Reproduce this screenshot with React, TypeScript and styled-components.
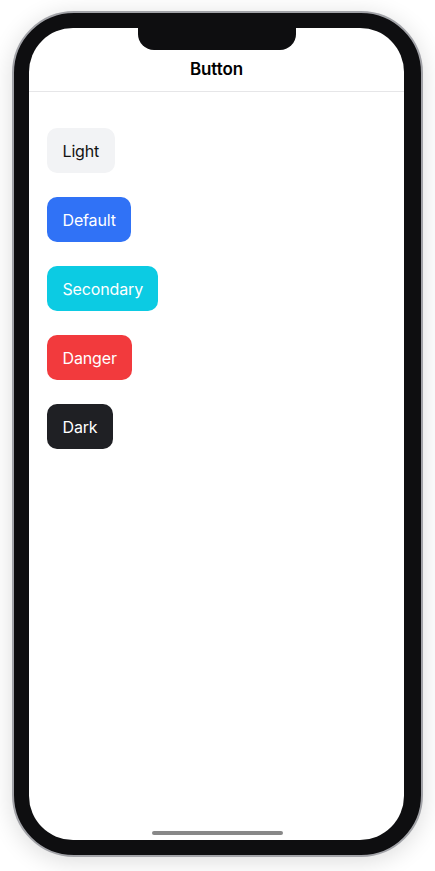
import styled, { createGlobalStyle } from "styled-components";

const GlobalStyle = createGlobalStyle`
  html, body {
    margin: 0;
    padding: 0;
    background: #ffffff;
  }
  body {
    font-family: Inter, "Noto Sans", sans-serif;
  }
`;

type Variant = "light" | "default" | "secondary" | "danger" | "dark";

const palette: Record<Variant, { bg: string; fg: string }> = {
    light: { bg: "#f2f3f5", fg: "#111111" },
    default: { bg: "#3072f6", fg: "#ffffff" },
    secondary: { bg: "#0ccbe3", fg: "#ffffff" },
    danger: { bg: "#f23a3d", fg: "#ffffff" },
    dark: { bg: "#1f2024", fg: "#ffffff" },
};

const Page = styled.div`
  width: 435px;
  height: 871px;
  display: flex;
  justify-content: center;
  padding-top: 11px;
  box-sizing: border-box;
`;

// outer gray rim + black bezel
const Phone = styled.div`
  width: 411px;
  height: 846px;
  box-sizing: border-box;
  border: 2px solid #a2a3a8;
  border-radius: 62px;
  background: #0e0e10;
  padding: 15px;
  box-shadow: 0 4px 24px rgba(0, 0, 0, 0.14);
`;

const Screen = styled.div`
  position: relative;
  width: 375px;
  height: 812px;
  background: #ffffff;
  border-radius: 44px;
  overflow: hidden;
  display: flex;
  flex-direction: column;
`;

const Notch = styled.div`
  position: absolute;
  top: 0;
  left: 109px;
  width: 158px;
  height: 22px;
  background: #0e0e10;
  border-radius: 0 0 16px 16px;
`;

const Header = styled.header`
  height: 64px;
  display: flex;
  align-items: flex-end;
  justify-content: center;
  padding-bottom: 11px;
  box-sizing: border-box;
  border-bottom: 1px solid #e6e6e8;
`;

const Title = styled.h1`
  margin: 0;
  font-size: 17px;
  line-height: 22px;
  font-weight: 600;
  letter-spacing: -0.1px;
  color: #000000;
`;

const Content = styled.main`
  flex: 1;
  display: flex;
  flex-direction: column;
  align-items: flex-start;
  gap: 24px;
  padding: 36px 18px;
`;

const Button = styled.button<{ $variant: Variant }>`
  height: 45px;
  padding: 0 15.5px;
  border: none;
  border-radius: 10px;
  font-family: Inter, "Noto Sans", sans-serif;
  font-size: 16px;
  letter-spacing: -0.15px;
  background: ${(p) => palette[p.$variant].bg};
  color: ${(p) => palette[p.$variant].fg};
  cursor: pointer;
`;

const HomeBar = styled.div`
  position: absolute;
  bottom: 5px;
  left: 123px;
  width: 131px;
  height: 4px;
  border-radius: 2px;
  background: #888888;
`;

const buttons: { label: string; variant: Variant }[] = [
    { label: "Light", variant: "light" },
    { label: "Default", variant: "default" },
    { label: "Secondary", variant: "secondary" },
    { label: "Danger", variant: "danger" },
    { label: "Dark", variant: "dark" },
];

export default function App() {
    return (
        <Page>
            <GlobalStyle />
            <Phone>
                <Screen>
                    <Notch />
                    <Header>
                        <Title>Button</Title>
                    </Header>
                    <Content>
                        {buttons.map((b) => (
                            <Button key={b.label} $variant={b.variant}>
                                {b.label}
                            </Button>
                        ))}
                    </Content>
                    <HomeBar />
                </Screen>
            </Phone>
        </Page>
    );
}
